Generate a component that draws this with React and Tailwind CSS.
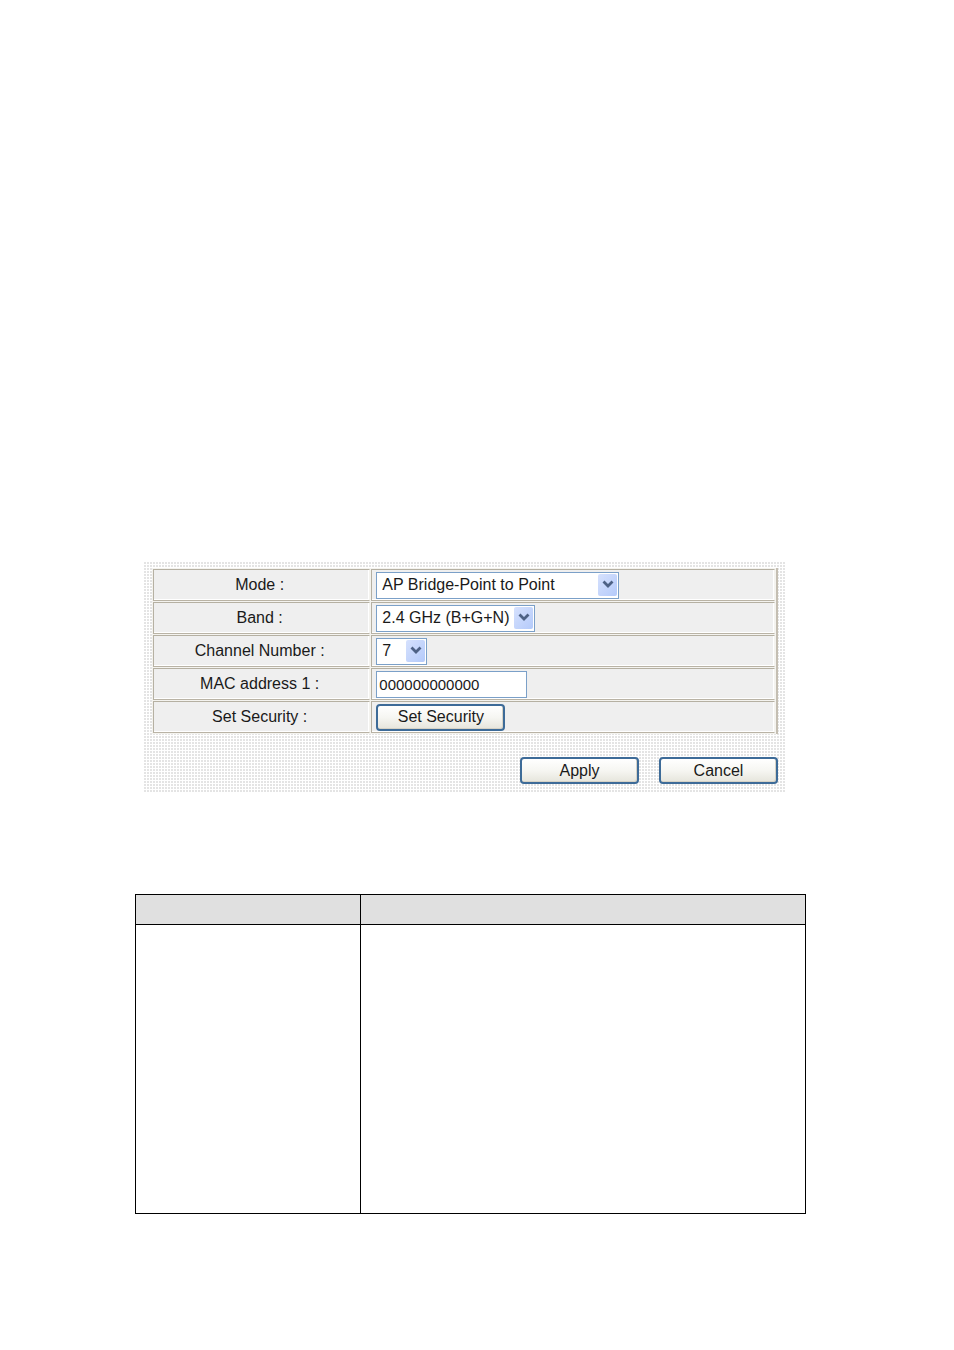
import React from "react";

const field = "border border-[#7ba0c8] bg-white text-[#1a1a1a]";

function Row({ id, label, children }) {
  const cell =
    "h-8 border border-t-[#b5b0a2] border-l-[#b5b0a2] border-r-[#f4f3ef] border-b-[#b9b3a5] bg-[#efefef] py-0 shadow-[inset_-1px_-1px_0_#ffffff]";
  return (
    <tr>
      <th scope="row" className={cell + " w-[35%] pr-1 pl-0 text-center text-[16px] leading-5 font-normal"}>
        <label htmlFor={id}>{label}</label>
      </th>
      <td className={cell + " pr-0 pl-1"}>
        <div className="flex items-center">{children}</div>
      </td>
    </tr>
  );
}

function Select({ id, width, options }) {
  return (
    <div className={"relative " + width}>
      <select
        id={id}
        className={field + " block h-[27px] w-full appearance-none rounded-none pr-6 pl-[5px] text-[16px] leading-5 outline-none"}
      >
        {options.map((o) => (
          <option key={o}>{o}</option>
        ))}
      </select>
      <span className="pointer-events-none absolute top-[2px] right-[2px] flex h-[22px] w-[19px] items-center justify-center rounded-[2px] bg-linear-to-br from-[#d6e1fd] to-[#b4cafa]">
        <svg width="12" height="9" viewBox="0 0 12 9" fill="none" stroke="#4d6185" strokeWidth="2.8">
          <path d="M1.5 1.5 6 6l4.500-4.500" />
        </svg>
      </span>
    </div>
  );
}

function Button({ id, width, children }) {
  return (
    <button
      id={id}
      type="button"
      className={
        width +
        " h-[27px] rounded-[4px] border-2 border-[#3d6b98] bg-linear-to-b from-white via-[#f6f6f2] to-[#e6e5dc] text-[16px] leading-5 text-[#1a1a1a] shadow-[inset_-1px_-1px_0_#d6d2c6]"
      }
    >
      {children}
    </button>
  );
}

export default function App() {
  return (
    <main className="min-h-screen bg-white pt-[562px] pb-[136px] font-['Liberation_Sans',Arial,sans-serif] text-[#1a1a1a]">
      <form
        className="mr-[168px] ml-36 bg-[#e4e4e4] bg-[linear-gradient(90deg,#fff_1px,transparent_1px),linear-gradient(#fff_1px,transparent_1px)] bg-size-[3px_3px] bg-position-[2px_2px] px-2 pt-1.5 pb-2"
        onSubmit={(e) => e.preventDefault()}
      >
        <table className="w-full table-fixed border-separate border-spacing-px border-r-2 border-[#c4beb2] bg-[#f4f3ef]">
          <tbody>
            <Row id="mode" label="Mode :">
              <Select id="mode" width="w-[243px]" options={["AP Bridge-Point to Point"]} />
            </Row>
            <Row id="band" label="Band :">
              <Select id="band" width="w-[159px]" options={["2.4 GHz (B+G+N)"]} />
            </Row>
            <Row id="channel" label="Channel Number :">
              <Select id="channel" width="w-[51px]" options={["7"]} />
            </Row>
            <Row id="mac" label="MAC address 1 :">
              <input
                id="mac"
                defaultValue="000000000000"
                className={field + " h-[27px] w-[151px] px-0.5 text-[15px] leading-5 outline-none"}
              />
            </Row>
            <Row id="security" label="Set Security :">
              <Button id="security" width="w-[129px]">Set Security</Button>
            </Row>
          </tbody>
        </table>
        <div className="mt-[23px] flex justify-end gap-5">
          <Button width="w-[119px]">Apply</Button>
          <Button width="w-[119px]">Cancel</Button>
        </div>
      </form>

      <table className="mt-[102px] mr-[148px] ml-[135px] w-[calc(100%-283px)] table-fixed border-collapse border border-black">
        <thead>
          <tr className="h-[30px] bg-[#e0e0e0]">
            <td className="w-[225px] border border-black" />
            <td className="border border-black" />
          </tr>
        </thead>
        <tbody>
          <tr className="h-[289px]">
            <td className="border border-black" />
            <td className="border border-black" />
          </tr>
        </tbody>
      </table>
    </main>
  );
}
